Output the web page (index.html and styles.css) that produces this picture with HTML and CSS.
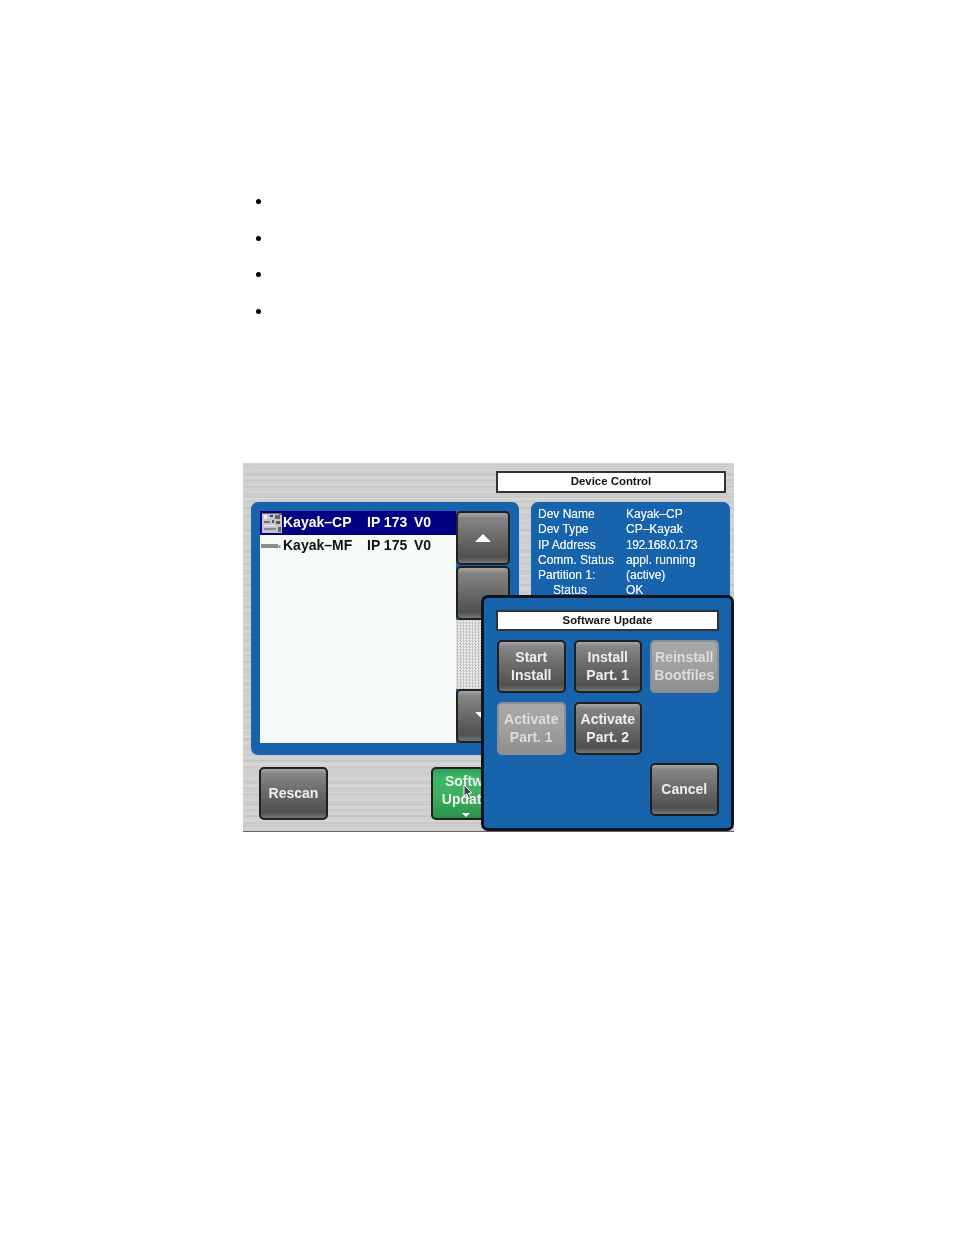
FILE: index.html
```html
<!DOCTYPE html>
<html lang="en">
<head>
    <meta charset="UTF-8">
    <meta name="viewport" content="width=device-width, initial-scale=1.0">
    <title>Device Control</title>
    <link rel="stylesheet" href="styles.css">
</head>
<body>

    <ul class="bullets">
        <li></li>
        <li></li>
        <li></li>
        <li></li>
    </ul>

    <div class="panel">
        <div class="panel-head">
            <div class="title-box head-title">Device Control</div>
        </div>

        <div class="panel-main">
            <div class="list-panel">
                <div class="device-list">
                    <div class="device-row selected">
                        <svg class="device-icon" width="20" height="20" viewBox="0 0 20 20">
                            <rect width="20" height="20" fill="#c4c6cc"/>
                            <rect x="0" y="0" width="20" height="1" fill="#6a6a7a"/>
                            <rect x="2" y="2" width="3" height="4" fill="#eee"/>
                            <rect x="8" y="2" width="3" height="2" fill="#444"/>
                            <rect x="13" y="2" width="5" height="4" fill="#666"/>
                            <rect x="17" y="1" width="3" height="1" fill="#b33"/>
                            <rect x="2" y="8" width="6" height="2" fill="#777"/>
                            <rect x="10" y="7" width="2" height="3" fill="#555"/>
                            <rect x="14" y="8" width="4" height="3" fill="#555"/>
                            <rect x="2" y="12" width="11" height="1" fill="#eee"/>
                            <rect x="2" y="15" width="12" height="2" fill="#888"/>
                            <rect x="16" y="14" width="3" height="5" fill="#666"/>
                        </svg>
                        <span class="device-name">Kayak–CP</span>
                        <span class="device-ip">IP 173</span>
                        <span class="device-ver">V0</span>
                    </div>
                    <div class="device-row">
                        <svg class="device-icon" width="20" height="20" viewBox="0 0 20 20">
                            <rect x="0" y="8" width="17" height="4" fill="#8d8d8d"/>
                            <rect x="17" y="9" width="3" height="3" fill="#c8c8d8"/>
                            <rect x="18" y="10" width="1" height="1" fill="#3344aa"/>
                        </svg>
                        <span class="device-name">Kayak–MF</span>
                        <span class="device-ip">IP 175</span>
                        <span class="device-ver">V0</span>
                    </div>
                </div>
                <div class="scroll-col">
                    <div class="btn scroll-btn arrow-up"></div>
                    <div class="btn scroll-btn"></div>
                    <div class="scroll-track"></div>
                    <div class="btn scroll-btn arrow-down"></div>
                </div>
            </div>

            <div class="info-panel">
                <span>Dev Name</span><span>Kayak–CP</span>
                <span>Dev Type</span><span>CP–Kayak</span>
                <span>IP Address</span><span class="ip">192.168.0.173</span>
                <span>Comm. Status</span><span>appl. running</span>
                <span>Partition 1:</span><span>(active)</span>
                <span class="indent">Status</span><span>OK</span>
            </div>
        </div>

        <div class="panel-foot">
            <div class="btn">Rescan</div>
            <div class="btn btn-green"><span class="soft">Software</span>Update</div>
        </div>

        <svg class="cursor" width="11" height="16" viewBox="0 0 11 16">
            <path d="M1 1 L1 12 L3.6 9.8 L5.6 14.5 L7.6 13.6 L5.6 9 L9 9 Z" fill="#39424a" stroke="#fff" stroke-width="1"/>
        </svg>

        <div class="popup">
            <div class="title-box popup-title">Software Update</div>
            <div class="popup-grid">
                <div class="btn btn-grid">Start<br>Install</div>
                <div class="btn btn-grid">Install<br>Part. 1</div>
                <div class="btn btn-grid btn-off">Reinstall<br>Bootfiles</div>
                <div class="btn btn-grid btn-off">Activate<br>Part. 1</div>
                <div class="btn btn-grid">Activate<br>Part. 2</div>
                <div class="btn btn-grid btn-cancel">Cancel</div>
            </div>
        </div>
    </div>

</body>
</html>
```

FILE: styles.css
```css
body {
    margin: 0;
    background-color: #fff;
    font-family: "Liberation Sans", Arial, sans-serif;
}
.bullets {
    margin: 0;
    padding: 192px 0 0 272px;
    height: 463px;
    box-sizing: border-box;
    font-size: 16px;
}
.bullets li {
    height: 36.6px;
}
.panel {
    position: relative;
    width: 491px;
    height: 369px;
    margin-left: 243px;
    box-sizing: border-box;
    padding: 8px 8px 0;
    overflow: hidden;
    border-bottom: 1px solid #666;
    filter: blur(0.35px);
    background-color: #cfcfcf;
    background-image:
        repeating-linear-gradient(180deg, rgba(255,255,255,0.18) 0 1px, rgba(0,0,0,0) 1px 3px, rgba(0,0,0,0.035) 3px 4px, rgba(0,0,0,0) 4px 7px),
        repeating-linear-gradient(180deg, rgba(0,0,0,0.03) 0 2px, rgba(255,255,255,0.07) 2px 5px, rgba(0,0,0,0) 5px 11px);
}
.panel-head {
    display: flex;
    justify-content: flex-end;
}
.title-box {
    display: flex;
    align-items: center;
    justify-content: center;
    box-sizing: border-box;
    padding-bottom: 2px;
    background-color: #fff;
    border: 2px solid #333;
    color: #111;
    font-size: 11.4px;
    font-weight: bold;
}
.head-title {
    width: 230px;
    height: 22px;
}
.panel-main {
    display: flex;
    gap: 12px;
    margin-top: 9px;
}
.list-panel {
    display: flex;
    flex: none;
    box-sizing: border-box;
    width: 268px;
    height: 253px;
    padding: 9px 9px 12px;
    border-radius: 7px;
    background-color: #1864ac;
}
.device-list {
    flex: 1;
    background-color: #f6fbf8;
    font-size: 14px;
    font-weight: bold;
    color: #111;
}
.device-row {
    display: flex;
    align-items: center;
    height: 21px;
    padding-left: 1px;
}
.device-row span {
    padding-bottom: 2px;
}
.device-row.selected {
    height: 24px;
    padding-left: 2px;
    background-color: #000080;
    color: #fff;
}
.device-icon {
    flex: none;
    margin-right: 2px;
}
.selected .device-icon {
    margin-right: 1px;
}
.device-name {
    width: 84px;
}
.device-ip {
    width: 47px;
}
.scroll-col {
    display: flex;
    flex: none;
    flex-direction: column;
    gap: 1px;
    width: 54px;
}
.scroll-track {
    flex: 1;
    margin: -1px 0;
    background-color: #ddd;
    background-image: repeating-conic-gradient(#c4c4c4 0 25%, #eee 0 50%);
    background-size: 3px 3px;
}
.btn {
    position: relative;
    display: flex;
    align-items: center;
    justify-content: center;
    box-sizing: border-box;
    width: 69px;
    height: 53px;
    padding-bottom: 1px;
    border: 2px solid #202020;
    border-radius: 5px;
    background: linear-gradient(180deg, #a6a6a6 0%, #858585 10%, #6c6c6c 45%, #505050 88%, #757575 100%);
    color: #eee;
    font-size: 14px;
    font-weight: bold;
    line-height: 18px;
    text-align: center;
}
.btn-grid {
    width: auto;
}
.scroll-btn {
    width: 54px;
    height: 54px;
}
.arrow-up::after,
.arrow-down::after {
    content: "";
    width: 0;
    height: 0;
    border-left: 8px solid transparent;
    border-right: 8px solid transparent;
}
.arrow-up::after {
    border-bottom: 8px solid #fff;
}
.arrow-down::after {
    border-top: 8px solid #fff;
}
.btn-green {
    flex-direction: column;
    background: linear-gradient(180deg, #2f9e55 0%, #3cb868 18%, #3fae62 55%, #2b9149 100%);
    padding-bottom: 7px;
}
.soft {
    margin-left: 18px;
}
.btn-green::after {
    content: "";
    position: absolute;
    left: 29px;
    bottom: 1px;
    border-left: 4px solid transparent;
    border-right: 4px solid transparent;
    border-top: 4px solid #fff;
}
.btn-off {
    border-color: #8a8f95;
    background: linear-gradient(180deg, #a8a8a8 0%, #a0a0a0 50%, #8e8e8e 100%);
    color: #dcdcdc;
}
.btn-cancel {
    grid-column: 3;
    grid-row: 3;
    margin-top: -1px;
}
.info-panel {
    display: grid;
    flex: none;
    grid-template-columns: 88px 1fr;
    align-content: start;
    box-sizing: border-box;
    width: 199px;
    height: 253px;
    padding: 5px 7px;
    border-radius: 7px;
    background-color: #1864ac;
    color: #e8eef5;
    font-size: 12px;
    line-height: 15.3px;
    text-shadow: 0 0 0.6px #e8eef5;
}
.ip {
    letter-spacing: -0.45px;
}
.indent {
    padding-left: 15px;
}
.panel-foot {
    display: flex;
    gap: 103px;
    margin-top: 12px;
    padding-left: 8px;
}
.cursor {
    position: absolute;
    left: 220px;
    top: 321px;
}
.popup {
    position: absolute;
    right: 0;
    bottom: 0;
    box-sizing: border-box;
    width: 253px;
    height: 236px;
    padding: 12px;
    border: 3px solid #0c1420;
    border-radius: 7px;
    background-color: #1864ac;
}
.popup-title {
    width: 223px;
    height: 21px;
}
.popup-grid {
    display: grid;
    grid-template-columns: repeat(3, 68.5px);
    grid-auto-rows: 53px;
    column-gap: 8px;
    row-gap: 9px;
    margin-top: 9px;
    margin-left: 1px;
}
```
